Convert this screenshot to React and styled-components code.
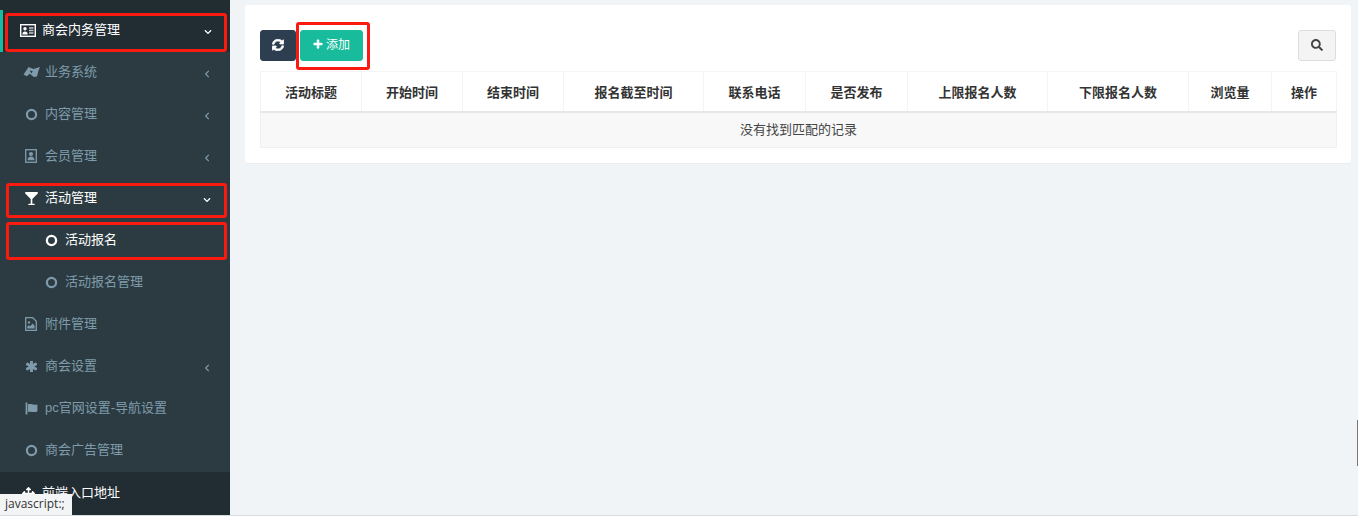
import React from "react";
import styled, { createGlobalStyle } from "styled-components";
import {
  FaChevronDown, FaChevronLeft, FaArrowsAlt, FaGlassMartini, FaSyncAlt, FaPlus, FaSearch, FaAsterisk,
} from "react-icons/fa";

const Global = createGlobalStyle`
  html, body { margin: 0; padding: 0; background: #f0f4f7; }
  body { font-family: "Liberation Sans", "Noto Sans CJK SC", sans-serif; font-size: 13px; overflow: hidden; }
`;

const Page = styled.div`
  position: relative;
  display: flex;
  width: 1358px;
  height: 515px;
  border-bottom: 1px solid #d8dcdf;
  overflow: hidden;
`;
const Sidebar = styled.aside`
  width: 230px;
  flex: none;
  background: #222d32;
  padding-top: 10px;
  box-sizing: border-box;
`;
const Menu = styled.ul`
  list-style: none;
  margin: 0;
  padding: 0;
`;
const Sub = styled.ul`
  list-style: none;
  margin: 0;
  padding: 0;
  background: #2c3b41;
`;
const Item = styled.li`
  height: 42px;
  display: flex;
  align-items: center;
  box-sizing: border-box;
  padding: 0 0 ${p => p.$pb ?? 2}px ${p => p.$indent}px;
  color: ${p => (p.$bright ? "#fff" : "#7f9bab")};
  background: ${p => (p.$dark ? "#222c33" : "#2c3b41")};
  border-left: ${p => (p.$accent ? "3px solid #18bc9c" : "none")};
  line-height: 18px;
`;
const Icon = styled.span`
  width: ${p => p.$w || 14}px;
  margin-right: ${p => p.$gap || 7}px;
  display: inline-flex;
  justify-content: center;
  font-size: ${p => p.$s || 13}px;
  flex: none;
`;
const Label = styled.span`
  flex: 1;
  font-size: 13px;
  white-space: nowrap;
`;
const Arrow = styled.span`
  width: 10px;
  margin-right: ${p => p.$mr || 18}px;
  display: inline-flex;
  justify-content: center;
  font-size: 8px;
  flex: none;
  margin-top: 3px;
`;
const Main = styled.main`
  flex: 1;
  min-width: 0;
  padding: 5px 7px 0 15px;
`;
const Card = styled.section`
  background: #fff;
  border-radius: 3px;
  padding: 25px 15px 15px;
  height: 158px;
  box-sizing: border-box;
  box-shadow: 0 1px 1px rgba(0,0,0,0.03);
`;
const Toolbar = styled.div`
  display: flex;
  align-items: center;
  gap: 4px;
  height: 31px;
  margin-bottom: 10px;
`;
const Button = styled.button`
  height: 31px;
  width: ${p => p.$w}px;
  border-radius: 3px;
  border: 1px solid ${p => p.$border};
  background: ${p => p.$bg};
  color: ${p => p.$fg};
  font: 12px "Liberation Sans", "Noto Sans CJK SC", sans-serif;
  display: inline-flex;
  align-items: center;
  justify-content: center;
  gap: 3px;
  padding: 0 0 ${p => p.$pb ?? 2}px;
`;
const Spacer = styled.div`flex: 1;`;
const Table = styled.table`
  width: 100%;
  border-collapse: collapse;
  table-layout: fixed;
`;
const Th = styled.th`
  width: ${p => p.$w}px;
  height: 40px;
  padding: 0;
  box-sizing: border-box;
  border: 1px solid #f4f4f4;
  border-bottom: 2px solid #e5e7e9;
  font-size: 13px;
  font-weight: 700;
  color: #333;
  text-align: center;
`;
const Td = styled.td`
  height: 36px;
  padding: 0 0 3px;
  box-sizing: border-box;
  border: 1px solid #f0f0f0;
  background: #f8f8f8;
  text-align: center;
  font-size: 13px;
  color: #444;
`;
const Mark = styled.div`
  position: absolute;
  left: ${p => p.$x}px;
  top: ${p => p.$y}px;
  width: ${p => p.$w}px;
  height: ${p => p.$h}px;
  box-sizing: border-box;
  border: 3px solid #fb1a10;
  border-radius: 3px;
  pointer-events: none;
`;
const Status = styled.div`
  position: absolute;
  left: 0;
  bottom: 0;
  width: 72px;
  height: 21px;
  background: #f2f4f5;
  color: #333;
  font: 12px "Open Sans", sans-serif;
  line-height: 20px;
  padding-left: 5px;
  box-sizing: border-box;
  white-space: nowrap;
`;
const Thumb = styled.div`
  position: absolute;
  right: 0;
  top: 420px;
  width: 1px;
  height: 46px;
  background: #777;
`;

const Ring = ({ w = 2.2 }) => (
  <svg width="13" height="13" viewBox="0 0 13 13">
    <circle cx="6.5" cy="6.5" r="4.6" fill="none" stroke="currentColor" strokeWidth={w} />
  </svg>
);
const CardIcon = () => (
  <svg width="16" height="13" viewBox="0 0 16 13">
    <rect x="0.7" y="0.7" width="14.6" height="11.6" fill="none" stroke="currentColor" strokeWidth="1.4" />
    <circle cx="5" cy="4.8" r="1.7" fill="currentColor" />
    <path d="M2.3 10.5c0-2 1-3 2.7-3s2.7 1 2.7 3z" fill="currentColor" />
    <path d="M9 4h4.5M9 6.5h4.5M9 9h4.5" stroke="currentColor" strokeWidth="1.3" opacity="0.75" />
  </svg>
);
const PortraitIcon = () => (
  <svg width="12" height="14" viewBox="0 0 12 14">
    <rect x="0.7" y="0.7" width="10.6" height="12.6" fill="none" stroke="currentColor" strokeWidth="1.3" />
    <circle cx="6" cy="5" r="2.1" fill="currentColor" />
    <path d="M2.6 11.2c0-2.4 1.3-3.6 3.4-3.6s3.4 1.2 3.4 3.6z" fill="currentColor" />
  </svg>
);
const BowIcon = () => (
  <svg width="18" height="14" viewBox="0 0 18 14">
    <path d="M0.5 9.5 4 4.5l1.5-2.6 5 2.2 6.5-2.1-1.5 3.5L14 11.5l-3.2.6-4-3.4-3 2.6z" fill="currentColor" />
    <path d="M6.8 5.6l3 .6-1.4 2.2z" fill="#2c3b41" />
  </svg>
);
const FlagIcon = () => (
  <svg width="13" height="13" viewBox="0 0 13 13">
    <rect x="0.6" y="0.5" width="1.8" height="12" fill="currentColor" />
    <path d="M3 2.4c3-1 4.6 1 9.4 0v7.2C8 11 6 8.8 3 10z" fill="currentColor" />
  </svg>
);
const FileImageIcon = () => (
  <svg width="12" height="14" viewBox="0 0 12 14">
    <path d="M0.7 0.7h7l3.6 3.6v9H0.7z" fill="none" stroke="currentColor" strokeWidth="1.3" />
    <circle cx="4" cy="5.4" r="1.2" fill="currentColor" />
    <path d="M2.3 11.5V9.6l1.7-1.4 1.2 1L7.6 6.6l2 2.2v2.7z" fill="currentColor" />
  </svg>
);

const heads = [["活动标题",101],["开始时间",101],["结束时间",101],["报名截至时间",140],["联系电话",102],["是否发布",102],["上限报名人数",140],["下限报名人数",141],["浏览量",83],["操作",65]];

export default function App() {
  return (
    <>
      <Global />
      <Page>
        <Sidebar>
          <Menu>
            <Item $accent $dark $bright $indent={17}>
              <Icon $w={16} $gap={6}><CardIcon /></Icon>
              <Label>商会内务管理</Label>
              <Arrow $mr={17}><FaChevronDown /></Arrow>
            </Item>
            <Sub>
              <Item $indent={23}><Icon $w={18} $gap={4}><BowIcon /></Icon><Label>业务系统</Label><Arrow><FaChevronLeft /></Arrow></Item>
              <Item $indent={24}><Icon><Ring /></Icon><Label>内容管理</Label><Arrow><FaChevronLeft /></Arrow></Item>
              <Item $indent={24}><Icon><PortraitIcon /></Icon><Label>会员管理</Label><Arrow><FaChevronLeft /></Arrow></Item>
              <Item $bright $indent={24}><Icon><FaGlassMartini /></Icon><Label>活动管理</Label><Arrow><FaChevronDown /></Arrow></Item>
              <Item $bright $indent={44}><Icon><Ring w={2.3} /></Icon><Label>活动报名</Label></Item>
              <Item $indent={44}><Icon><Ring /></Icon><Label>活动报名管理</Label></Item>
              <Item $indent={24}><Icon><FileImageIcon /></Icon><Label>附件管理</Label></Item>
              <Item $indent={24}><Icon $s={11}><FaAsterisk stroke="currentColor" strokeWidth="50" /></Icon><Label>商会设置</Label><Arrow><FaChevronLeft /></Arrow></Item>
              <Item $indent={24}><Icon><FlagIcon /></Icon><Label>pc官网设置-导航设置</Label></Item>
              <Item $indent={24}><Icon><Ring /></Icon><Label>商会广告管理</Label></Item>
            </Sub>
            <Item $dark $bright $indent={21} $pb={0}>
              <Icon $gap={7}><FaArrowsAlt /></Icon>
              <Label>前端入口地址</Label>
            </Item>
          </Menu>
        </Sidebar>
        <Main>
          <Card>
            <Toolbar>
              <Button $w={36} $bg="#2c3e50" $border="#2c3e50" $fg="#fff"><FaSyncAlt size={12} stroke="currentColor" strokeWidth="30" /></Button>
              <Button $w={63} $bg="#18bc9c" $border="#18bc9c" $fg="#fff" $pb={4}><FaPlus size={10} stroke="currentColor" strokeWidth="30" />添加</Button>
              <Spacer />
              <Button $w={38} $bg="#f4f4f4" $border="#ddd" $fg="#444"><FaSearch size={12} /></Button>
            </Toolbar>
            <Table>
              <thead><tr>{heads.map(([h, w]) => <Th key={h} $w={w}>{h}</Th>)}</tr></thead>
              <tbody><tr><Td colSpan={10}>没有找到匹配的记录</Td></tr></tbody>
            </Table>
          </Card>
        </Main>
        <Mark $x={5} $y={13} $w={222} $h={39} />
        <Mark $x={6} $y={183} $w={221} $h={35} />
        <Mark $x={6} $y={222} $w={221} $h={38} />
        <Mark $x={296} $y={22} $w={74} $h={48} />
        <Thumb />
        <Status>javascript:;</Status>
      </Page>
    </>
  );
}
